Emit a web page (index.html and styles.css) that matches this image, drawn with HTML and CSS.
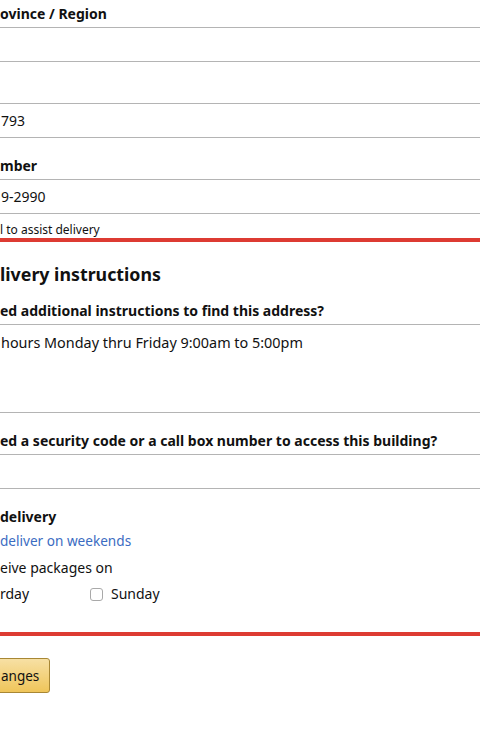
FILE: index.html
```html
<!DOCTYPE html>
<html lang="en">
<head>
<meta charset="utf-8">
<title>Edit address</title>
<link rel="stylesheet" href="styles.css">
</head>
<body>
<main class="page">
  <div class="field">
    <label class="label">ovince / Region</label>
    <input class="input" type="text" value="">
  </div>
  <div class="field">
    <label class="label">&nbsp;</label>
    <input class="input" type="text" value="793">
  </div>
  <div class="field field-last">
    <label class="label">mber</label>
    <input class="input" type="text" value="9-2990">
  </div>
  <p class="hint">l to assist delivery</p>

  <section class="highlight">
    <h2 class="heading">livery instructions</h2>
    <div class="field">
      <label class="label">ed additional instructions to find this address?</label>
      <textarea class="textarea">hours Monday thru Friday 9:00am to 5:00pm</textarea>
    </div>
    <div class="field">
      <label class="label">ed a security code or a call box number to access this building?</label>
      <input class="input" type="text" value="">
    </div>
    <div class="weekend">
      <div class="weekend-title">delivery</div>
      <a class="link" href="#">deliver on weekends</a>
      <div class="receive">eive packages on</div>
      <div class="days">
        <label class="day day-first">rday</label>
        <label class="day"><input class="check" type="checkbox">Sunday</label>
      </div>
    </div>
  </section>

  <div class="actions">
    <button class="btn" type="button">anges</button>
  </div>
</main>
</body>
</html>
```
FILE: styles.css
```css
html, body {
  margin: 0;
  padding: 0;
  overflow: hidden;
  background: #fff;
}

body {
  font-family: "Noto Sans", Lato, sans-serif;
  color: #111;
}

.page {
  padding-top: 4px;
}

.field {
  display: flex;
  flex-direction: column;
  margin-bottom: 18px;
}

.field-last {
  margin-bottom: 0;
}

.label {
  display: block;
  font-size: 14px;
  font-weight: 700;
  line-height: 20px;
  height: 20px;
  margin-bottom: 3px;
  white-space: nowrap;
}

.input,
.textarea {
  display: block;
  box-sizing: border-box;
  margin: 0 -6px;
  width: calc(100% + 12px);
  border: 1px solid #b4b4b4;
  border-radius: 3px;
  padding: 0 6px;
  font-family: inherit;
  font-size: 14px;
  color: #111;
  background: #fff;
  outline: none;
}

.input {
  height: 35px;
}

.textarea {
  height: 89px;
  padding-top: 8px;
  font-size: 14.4px;
  line-height: 20px;
  resize: none;
}

.hint {
  margin: 8px 0 0;
  font-size: 12px;
  line-height: 16px;
}

.highlight {
  margin: 0 -6px;
  padding: 20px 6px 28px;
  border-top: 4px solid #dd3b32;
  border-bottom: 4px solid #dd3b32;
}

.heading {
  margin: 0 0 15px;
  font-size: 17.8px;
  font-weight: 700;
  line-height: 24px;
}

.weekend {
  display: flex;
  flex-direction: column;
  font-size: 14px;
  line-height: 20px;
}

.weekend-title {
  font-weight: 700;
}

.link {
  margin-top: 4px;
  color: #3b6cc2;
  font-size: 13.6px;
  text-decoration: none;
}

.receive {
  margin-top: 7px;
}

.days {
  display: flex;
  margin-top: 6px;
}

.day {
  display: flex;
  align-items: center;
}

.day-first {
  width: 90px;
}

.check {
  appearance: none;
  -webkit-appearance: none;
  box-sizing: border-box;
  width: 13px;
  height: 13px;
  margin: 0 8px 0 0;
  border: 1px solid #a9a9a9;
  border-radius: 3px;
  background: #fff;
}

.actions {
  padding-top: 22px;
}

.btn {
  box-sizing: border-box;
  height: 35px;
  margin-left: -15px;
  padding: 0 10px 0 15px;
  border: 1px solid #a88734;
  border-radius: 3px;
  background: linear-gradient(#f7e0a4, #efc55a);
  font-family: inherit;
  font-size: 13.5px;
  color: #111;
}
```
